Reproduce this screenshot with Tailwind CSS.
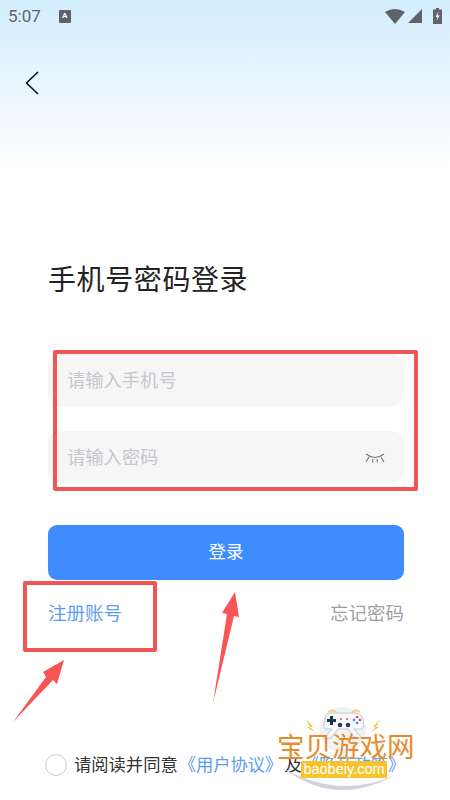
<!DOCTYPE html>
<html lang="zh">
<head>
<meta charset="utf-8">
<script src="https://cdn.jsdelivr.net/npm/@tailwindcss/browser@4"></script>
</head>
<body class="bg-white">
<main class="relative w-[450px] h-[800px] overflow-hidden bg-gradient-to-b from-[#d2edfe] via-[#f1f9ff] via-[115px] to-white to-[175px] font-['Roboto','Noto_Sans_CJK_SC',sans-serif]">

  <!-- status bar -->
  <header class="h-[32px] pl-[8px] pr-[8px] flex items-center justify-between text-[#5f6368]">
    <div class="flex items-center gap-[18px]">
      <span class="text-[17px] leading-none">5:07</span>
      <span class="w-[12px] h-[13px] rounded-[1px] bg-[#5f6368] text-white text-[8px] leading-[12px] font-bold text-center">A</span>
    </div>
    <div class="flex items-center gap-[3px]">
      <svg width="20" height="16" viewBox="0 0 20 16"><path d="M0 4 Q10 -2 20 4 L10 16 Z" fill="#5f6368"/></svg>
      <svg width="14" height="14" viewBox="0 0 14 14"><path d="M14 0 V14 H0 Z" fill="#5f6368"/></svg>
      <svg class="ml-[8px]" width="9" height="16" viewBox="0 0 9 16"><path d="M3 0 H6 V1.5 H9 V16 H0 V1.5 H3 Z" fill="#5f6368"/><path d="M5.5 3.5 L2.5 9 H4.5 L3.5 13 L6.7 7.5 H4.7 Z" fill="#fff"/></svg>
    </div>
  </header>

  <!-- back -->
  <div class="pl-[25px] pt-[39px] h-[200px]">
    <svg width="14" height="24" viewBox="0 0 14 24" fill="none" stroke="#111" stroke-width="1.6"><path d="M13 1 L1.5 12 L13 23"/></svg>
  </div>

  <section class="px-[48px] w-[452px]">
    <h1 class="text-[28px] leading-[34px] mt-[32px] text-[#222] tracking-[0.6px]">手机号密码登录</h1>

    <div class="mt-[56px] flex flex-col gap-[25px]">
      <div class="h-[52px] rounded-[12px] bg-[#f6f6f7] pl-[19px] pt-[1px] flex items-center text-[18.3px] text-[#c6c7cc]">请输入手机号</div>
      <div class="h-[52px] rounded-[12px] bg-[#f6f6f7] pl-[19px] pr-[19px] pt-[2px] flex items-center justify-between text-[18.3px] text-[#c6c7cc]">
        <span>请输入密码</span>
        <svg width="20" height="12" viewBox="0 0 20 12" fill="none" stroke="#777" stroke-width="1.1"><path d="M1 2 Q10 9 19 2 M4 5 L1 10 M8 7 L7.5 10.5 M12 7 L12.5 10.5 M16 5 L19 10"/></svg>
      </div>
    </div>

    <button class="mt-[42px] w-full h-[55px] rounded-[9px] bg-[#3f8cff] text-white text-[17.5px]">登录</button>

    <div class="mt-[23px] flex justify-between items-center text-[18.5px] leading-[22px]">
      <span class="text-[#5c9df2]">注册账号</span>
      <span class="text-[#a0a0a4]">忘记密码</span>
    </div>
  </section>

  <!-- agreement -->
  <div class="absolute left-[45px] top-[754px] flex items-center gap-[7px] text-[17.3px] leading-[22px] whitespace-nowrap">
    <span class="w-[22px] h-[22px] rounded-full border-[1.5px] border-[#cfcfcf] bg-white"></span>
    <span class="text-[#333]">请阅读并同意<span class="ml-[1px] text-[#5c9df2]">《用户协议》</span><span class="ml-[2px]">及</span><span class="text-[#5c9df2]">《隐私政策》</span></span>
  </div>

  <!-- red annotations -->
  <div class="absolute left-[53px] top-[350px] w-[365px] h-[141px] border-[4px] border-[#f25555] rounded-[2px]"></div>
  <div class="absolute left-[23px] top-[581px] w-[134px] h-[71px] border-[4px] border-[#f25555] rounded-[2px]"></div>
  <svg class="absolute left-0 top-[560px]" width="260" height="170" viewBox="0 0 260 170" fill="#f85555">
    <path d="M13 162 L46 117 L43 112 L64 100 L57 124 L53 120 Z"/>
    <path d="M213 143 L227 54 L222 53 L235 32 L239 57 L234 56 Z"/>
  </svg>

  <!-- watermark -->
  <div class="absolute left-[270px] top-[700px] w-[180px] h-[100px]">
    <svg class="absolute inset-0" width="180" height="100" viewBox="0 0 180 100">
      <path d="M13 68 Q70 112 137 68 Q110 86 72 86 Q40 84 13 68 Z" fill="#cfd3dc"/>
      <circle cx="73" cy="30" r="23" fill="#f1f2f4"/>
      <path d="M58 12 Q62 9 66 12 M82 12 Q86 9 90 12" fill="none" stroke="#f0cf7a" stroke-width="2"/>
      <path d="M60 13 H86 Q92 14 93 20 L94 26 Q93 30 88 29 L84 29 L92 38 H85 L78 29 H68 L61 38 H54 L62 29 L58 29 Q54 30 54 26 L55 20 Q55 14 60 13 Z" fill="#f7f8fa" stroke="#c4c8d1" stroke-width="1"/>
      <path d="M59 21 H62 V18 H65 V21 H68 V24 H65 V27 H62 V24 H59 Z" transform="translate(-2 -2)" fill="#1f3550"/>
      <circle cx="70" cy="25" r="2.3" fill="#2c3e50"/><circle cx="78" cy="25" r="2.3" fill="#2c3e50"/>
      <circle cx="71" cy="19" r="1" fill="#d9534f"/><circle cx="77" cy="19" r="1" fill="#d9534f"/>
      <circle cx="87" cy="17" r="1.3" fill="#d9534f"/><circle cx="87" cy="23" r="1.3" fill="#3f8cff"/><circle cx="84" cy="20" r="1.3" fill="#3f8cff"/><circle cx="90" cy="20" r="1.3" fill="#d9534f"/>
      <path d="M36 19 L43 27 L40 27 L46 33 L37 27 L40 27 Z M110 19 L103 27 L106 27 L100 33 L109 27 L106 27 Z" fill="#f2c14e"/>
    </svg>
    <span class="absolute left-[7px] top-[31px] text-[27.5px] leading-[34px] text-[#e58c2f] whitespace-nowrap">宝贝游戏网</span>
    <span class="absolute left-[31px] top-[61px] w-[86px] h-[17px] text-center bg-[#f6c52e] text-white text-[14.5px] leading-[17px] font-['Liberation_Sans',sans-serif]">baobeiy.com</span>
  </div>
</main>
</body>
</html>
